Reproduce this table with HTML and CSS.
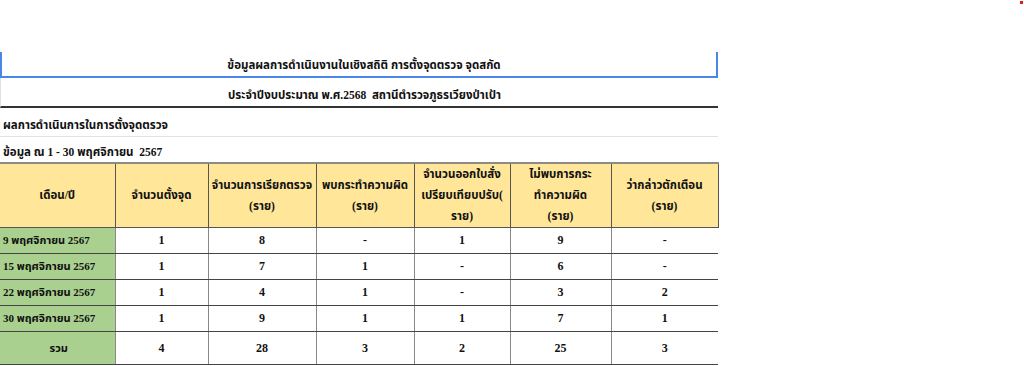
FILE: index.html
```html
<!DOCTYPE html>
<html lang="th">
<head>
<meta charset="utf-8">
<title>ข้อมูลผลการดำเนินงาน</title>
<link rel="stylesheet" href="styles.css">
</head>
<body>
<span class="dot"></span>
<div class="sheet">
  <div class="title-main">ข้อมูลผลการดำเนินงานในเชิงสถิติ การตั้งจุดตรวจ จุดสกัด</div>
  <div class="title-sub">ประจำปีงบประมาณ พ.ศ.2568&nbsp;&nbsp;สถานีตำรวจภูธรเวียงป่าเป้า</div>
  <div class="section">ผลการดำเนินการในการตั้งจุดตรวจ</div>
  <div class="asof">ข้อมูล ณ 1 - 30 พฤศจิกายน&nbsp;&nbsp;2567</div>
  <table class="grid">
    <colgroup>
      <col class="c1"><col class="c2"><col class="c3"><col class="c4"><col class="c5"><col class="c6"><col class="c7">
    </colgroup>
    <thead>
      <tr>
        <th>เดือน/ปี</th>
        <th>จำนวนตั้งจุด</th>
        <th>จำนวนการเรียกตรวจ<br>(ราย)</th>
        <th>พบกระทำความผิด<br>(ราย)</th>
        <th>จำนวนออกใบสั่ง<br>เปรียบเทียบปรับ(<br>ราย)</th>
        <th>ไม่พบการกระ<br>ทำความผิด<br>(ราย)</th>
        <th>ว่ากล่าวตักเตือน<br>(ราย)</th>
      </tr>
    </thead>
    <tbody>
      <tr><td class="month">9 พฤศจิกายน 2567</td><td>1</td><td>8</td><td>-</td><td>1</td><td>9</td><td>-</td></tr>
      <tr><td class="month">15 พฤศจิกายน 2567</td><td>1</td><td>7</td><td>1</td><td>-</td><td>6</td><td>-</td></tr>
      <tr><td class="month">22 พฤศจิกายน 2567</td><td>1</td><td>4</td><td>1</td><td>-</td><td>3</td><td>2</td></tr>
      <tr><td class="month">30 พฤศจิกายน 2567</td><td>1</td><td>9</td><td>1</td><td>1</td><td>7</td><td>1</td></tr>
      <tr class="total"><td class="month sum">รวม</td><td>4</td><td>28</td><td>3</td><td>2</td><td>25</td><td>3</td></tr>
    </tbody>
  </table>
</div>
</body>
</html>
```

FILE: styles.css
```css
html, body {
  margin: 0;
  padding: 0;
  background: #ffffff;
}
body {
  font-family: "Liberation Serif", "Noto Sans Thai", "Noto Sans", serif;
  font-weight: bold;
  font-size: 11.5px;
  color: #111;
  position: relative;
  width: 1024px;
  height: 366px;
  overflow: hidden;
}
.dot {
  position: absolute;
  top: 1px;
  left: 1020px;
  width: 3px;
  height: 3px;
  background: #e02020;
}
.sheet {
  width: 718px;
  padding-top: 52px;
}
.title-main {
  height: 24px;
  line-height: 26px;
  text-align: center;
  border-left: 2px solid #4a86e8;
  border-right: 2px solid #4a86e8;
  border-bottom: 2px solid #4a86e8;
  padding-left: 10px;
}
.title-sub {
  height: 28px;
  line-height: 34px;
  text-align: center;
  border-left: 1px solid #e0e0e0;
  border-bottom: 2px solid #333;
  padding-left: 10px;
}
.section {
  height: 28px;
  line-height: 34px;
  padding-left: 3px;
  border-bottom: 1px solid #e2e2e2;
}
.asof {
  height: 25px;
  line-height: 30px;
  padding-left: 3px;
}
.grid {
  border-collapse: collapse;
  table-layout: fixed;
  width: 718px;
}
.c1 { width: 115px; }
.c2 { width: 93px; }
.c3 { width: 108px; }
.c4 { width: 98px; }
.c5 { width: 96px; }
.c6 { width: 101px; }
.c7 { width: 107px; }
.grid th {
  background: #ffe699;
  height: 62px;
  line-height: 21px;
  font-size: 11.5px;
  text-align: center;
  vertical-align: middle;
  white-space: nowrap;
  border-top: 2px solid #8c8c84;
  border-left: 1px solid #555;
  border-right: 1px solid #555;
  border-bottom: 1px solid #555;
  padding: 0;
  font-weight: bold;
}
.grid th:first-child { border-left: none; }
.grid td {
  height: 25px;
  text-align: center;
  vertical-align: middle;
  border: 1px solid #444;
  border-left-color: #888;
  border-right-color: #888;
  padding: 0;
  font-size: 12px;
}
.grid td:first-child { border-left: none; }
.grid td:last-child { border-right: none; }
.grid td.month {
  background: #a9d08e;
  text-align: left;
  padding-left: 3px;
  font-size: 11px;
}
.grid td.sum {
  text-align: center;
}
.grid tr.total td {
  height: 32px;
}
```
